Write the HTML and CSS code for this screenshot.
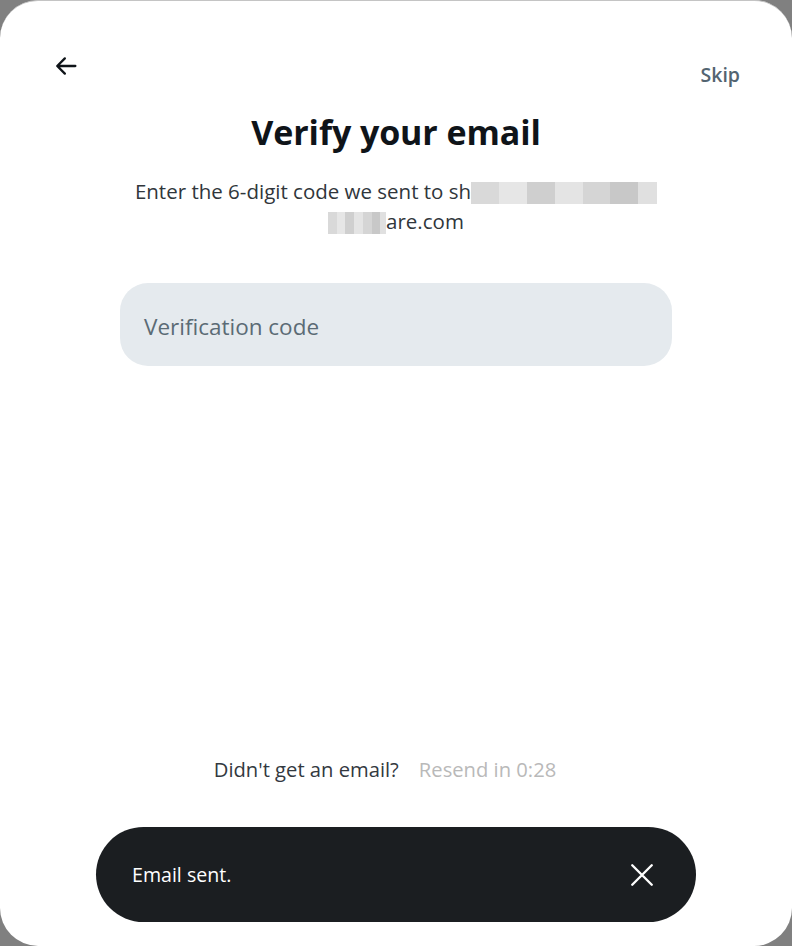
FILE: index.html
```html
<!DOCTYPE html>
<html>
<head>
<meta charset="utf-8">
<link rel="stylesheet" href="styles.css">
</head>
<body>
<div class="card">
  <div class="header">
    <button class="back" aria-label="Back">
      <svg width="28" height="28" viewBox="0 0 24 24"><path d="M20 12H5M11 5.5L4.5 12l6.5 6.5" fill="none" stroke="#0f1419" stroke-width="2" stroke-linecap="round" stroke-linejoin="round"/></svg>
    </button>
    <span class="skip">Skip</span>
  </div>
  <h1 class="title">Verify your email</h1>
  <p class="desc">Enter the 6-digit code we sent to sh<span class="blur b1"></span><br><span class="blur b2"></span>are.com</p>
  <div class="field">Verification code</div>
  <div class="spacer"></div>
  <p class="resend">Didn't get an email?<span class="timer">Resend in 0:28</span></p>
  <div class="toast">
    <span>Email sent.</span>
    <svg width="26" height="26" viewBox="0 0 24 24"><path d="M3 3L21 21M21 3L3 21" stroke="#fff" stroke-width="2.2" stroke-linecap="round"/></svg>
  </div>
</div>
</body>
</html>
```
FILE: styles.css
```css
html, body { margin: 0; padding: 0; }
body {
  background: #808080;
  font-family: "Open Sans", "Noto Sans", sans-serif;
  width: 792px;
  height: 946px;
  overflow: hidden;
}
.card {
  box-sizing: border-box;
  width: 792px;
  height: 946px;
  background: #fff;
  border-radius: 38px;
  border-top: 1px solid #c4c4c4;
  display: flex;
  flex-direction: column;
  align-items: center;
}
.header {
  align-self: stretch;
  display: flex;
  justify-content: space-between;
  align-items: flex-start;
  padding: 51px 52px 0 52px;
  height: 58px;
}
.back {
  border: 0;
  background: none;
  padding: 0;
  width: 28px;
  height: 28px;
}
.skip {
  margin-top: 9px;
  font-weight: 600;
  font-size: 19.5px;
  color: #536471;
}
.title {
  margin: 0;
  font-size: 34px;
  font-weight: 700;
  color: #0f1419;
  line-height: 44px;
  letter-spacing: -0.1px;
}
.desc {
  margin: 22px 0 0;
  text-align: center;
  font-size: 20.5px;
  line-height: 30px;
  color: #30363b;
}
.blur {
  display: inline-block;
  height: 22px;
  vertical-align: -5px;
  background: linear-gradient(90deg, #d9d9d9 0 15%, #e6e6e6 15% 30%, #cfcfcf 30% 45%, #e4e4e4 45% 60%, #d5d5d5 60% 75%, #c8c8c8 75% 90%, #e0e0e0 90%);
}
.b1 { width: 186px; }
.b2 { width: 58px; }
.field {
  margin-top: 47px;
  box-sizing: border-box;
  width: 552px;
  height: 83px;
  border-radius: 28px;
  background: #e5eaee;
  padding: 4px 0 0 24px;
  display: flex;
  align-items: center;
  font-size: 22.5px;
  color: #5b6b75;
}
.spacer { flex: 1; }
.resend {
  margin: 0 0 44px;
  padding-right: 22px;
  font-size: 20.2px;
  color: #33393f;
}
.timer {
  margin-left: 20px;
  color: #b9b9b9;
}
.toast {
  box-sizing: border-box;
  width: 600px;
  height: 95px;
  margin-bottom: 24px;
  border-radius: 48px;
  background: #1b1e21;
  color: #fff;
  display: flex;
  align-items: center;
  justify-content: space-between;
  padding: 0 41px 0 36px;
  font-size: 19.6px;
}
```
